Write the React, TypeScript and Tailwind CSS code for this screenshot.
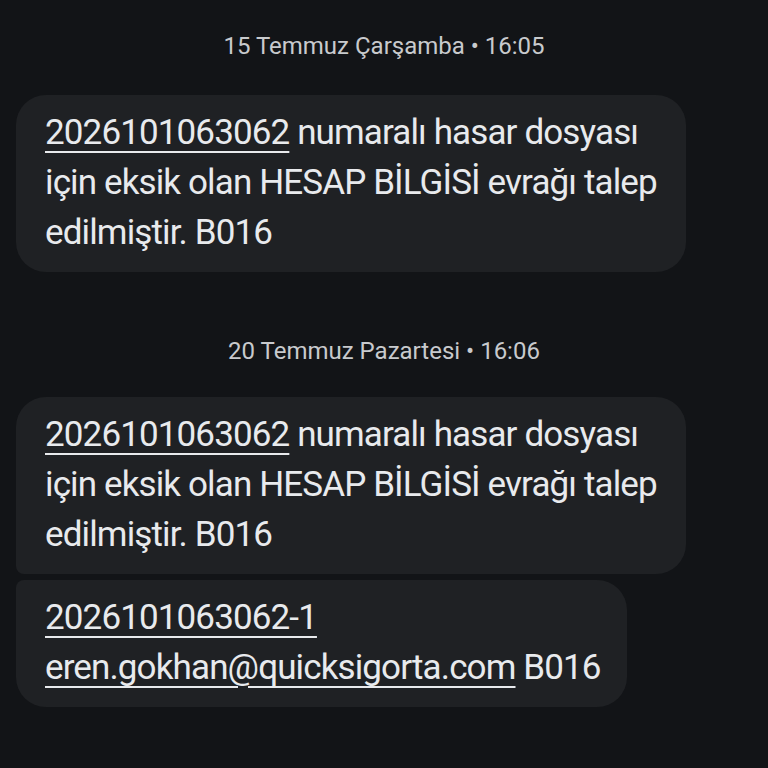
import React from "react";

const font = { fontFamily: "Roboto, 'Noto Sans', sans-serif" };

function DateLabel({ text }: { text: string }) {
  return (
    <div className="flex justify-center text-[24px] leading-[28px] text-[#c8cacd]">
      {text}
    </div>
  );
}

function Link({ children }: { children: React.ReactNode }) {
  return <span className="underline decoration-2 underline-offset-[7px]">{children}</span>;
}

export default function App() {
  return (
    <div
      className="w-[768px] h-[768px] bg-[#121417] text-[#e8eaed] overflow-hidden flex flex-col pt-[32px]"
      style={font}
    >
      <DateLabel text="15 Temmuz Çarşamba • 16:05" />
      <div className="mt-[35px] ml-[16px] w-[670px] rounded-[30px] bg-[#1f2124] pl-[29px] pr-[20px] pt-[13px] pb-[14px] text-[35px] leading-[50px] tracking-[-0.025em]">
        <Link>2026101063062</Link> numaralı hasar dosyası
        <br />
        için eksik olan HESAP BİLGİSİ evrağı talep
        <br />
        edilmiştir. B016
      </div>
      <div className="mt-[65px]">
        <DateLabel text="20 Temmuz Pazartesi • 16:06" />
      </div>
      <div className="mt-[32px] ml-[16px] w-[670px] rounded-[30px] rounded-bl-[8px] bg-[#1f2124] pl-[29px] pr-[20px] pt-[13px] pb-[14px] text-[35px] leading-[50px] tracking-[-0.025em]">
        <Link>2026101063062</Link> numaralı hasar dosyası
        <br />
        için eksik olan HESAP BİLGİSİ evrağı talep
        <br />
        edilmiştir. B016
      </div>
      <div className="mt-[6px] ml-[16px] w-[611px] rounded-[30px] rounded-tl-[8px] bg-[#1f2124] pl-[29px] pr-[20px] pt-[13px] pb-[14px] text-[35px] leading-[50px] tracking-[-0.025em]">
        <Link>2026101063062-1</Link>
        <br />
        <Link>eren.gokhan@quicksigorta.com</Link> B016
      </div>
    </div>
  );
}
